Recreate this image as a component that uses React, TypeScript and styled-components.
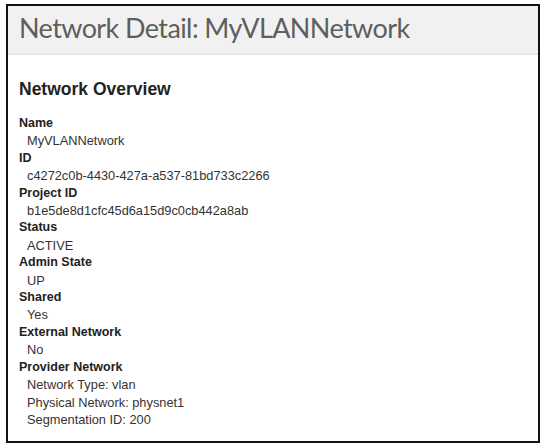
import React from 'react';
import styled, { createGlobalStyle } from 'styled-components';

const GlobalStyle = createGlobalStyle`
  html, body {
    margin: 0;
    padding: 0;
    background: #ffffff;
  }
  body {
    font-family: "Liberation Sans", Arial, sans-serif;
  }
`;

type Item = { label: string; values: string[] };

const items: Item[] = [
  { label: 'Name', values: ['MyVLANNetwork'] },
  { label: 'ID', values: ['c4272c0b-4430-427a-a537-81bd733c2266'] },
  { label: 'Project ID', values: ['b1e5de8d1cfc45d6a15d9c0cb442a8ab'] },
  { label: 'Status', values: ['ACTIVE'] },
  { label: 'Admin State', values: ['UP'] },
  { label: 'Shared', values: ['Yes'] },
  { label: 'External Network', values: ['No'] },
  {
    label: 'Provider Network',
    values: [
      'Network Type: vlan',
      'Physical Network: physnet1',
      'Segmentation ID: 200',
    ],
  },
];

export default function App() {
  return (
    <>
      <GlobalStyle />
      <Page>
        <Frame>
          <PageHeader>
            <Title>Network Detail: MyVLANNetwork</Title>
          </PageHeader>
          <Content>
            <SectionTitle>Network Overview</SectionTitle>
            <DetailList>
              {items.map((item) => (
                <React.Fragment key={item.label}>
                  <Term>{item.label}</Term>
                  {item.values.map((v) => (
                    <Value key={v}>{v}</Value>
                  ))}
                </React.Fragment>
              ))}
            </DetailList>
          </Content>
        </Frame>
      </Page>
    </>
  );
}

const Page = styled.div`
  width: 544px;
  height: 447px;
  padding: 4px 4px 4px 6px;
  box-sizing: border-box;
`;

const Frame = styled.div`
  width: 534px;
  height: 439px;
  box-sizing: border-box;
  border: 2px solid #111;
  background: #fff;
  display: flex;
  flex-direction: column;
`;

const PageHeader = styled.div`
  box-sizing: content-box;
  height: 44px;
  padding: 0 11px 3px;
  background: #f1f1f1;
  border-bottom: 2px solid #e6e6e6;
  display: flex;
  align-items: center;
`;

const Title = styled.h1`
  margin: 0;
  font-family: Lato, "Open Sans", sans-serif;
  font-weight: 400;
  font-size: 27px;
  line-height: 34px;
  letter-spacing: -0.6px;
  color: #5e5e5e;
`;

const Content = styled.div`
  padding: 24px 11px 0;
`;

const SectionTitle = styled.h3`
  margin: 0 0 16px;
  font-size: 17.5px;
  line-height: 20px;
  font-weight: 700;
  color: #222;
`;

const DetailList = styled.dl`
  margin: 0;
  line-height: 17.4px;
  color: #333;
`;

const Term = styled.dt`
  font-size: 12.5px;
  font-weight: 700;
  color: #222;
`;

const Value = styled.dd`
  margin: 0 0 0 8px;
  font-size: 12.8px;
`;
